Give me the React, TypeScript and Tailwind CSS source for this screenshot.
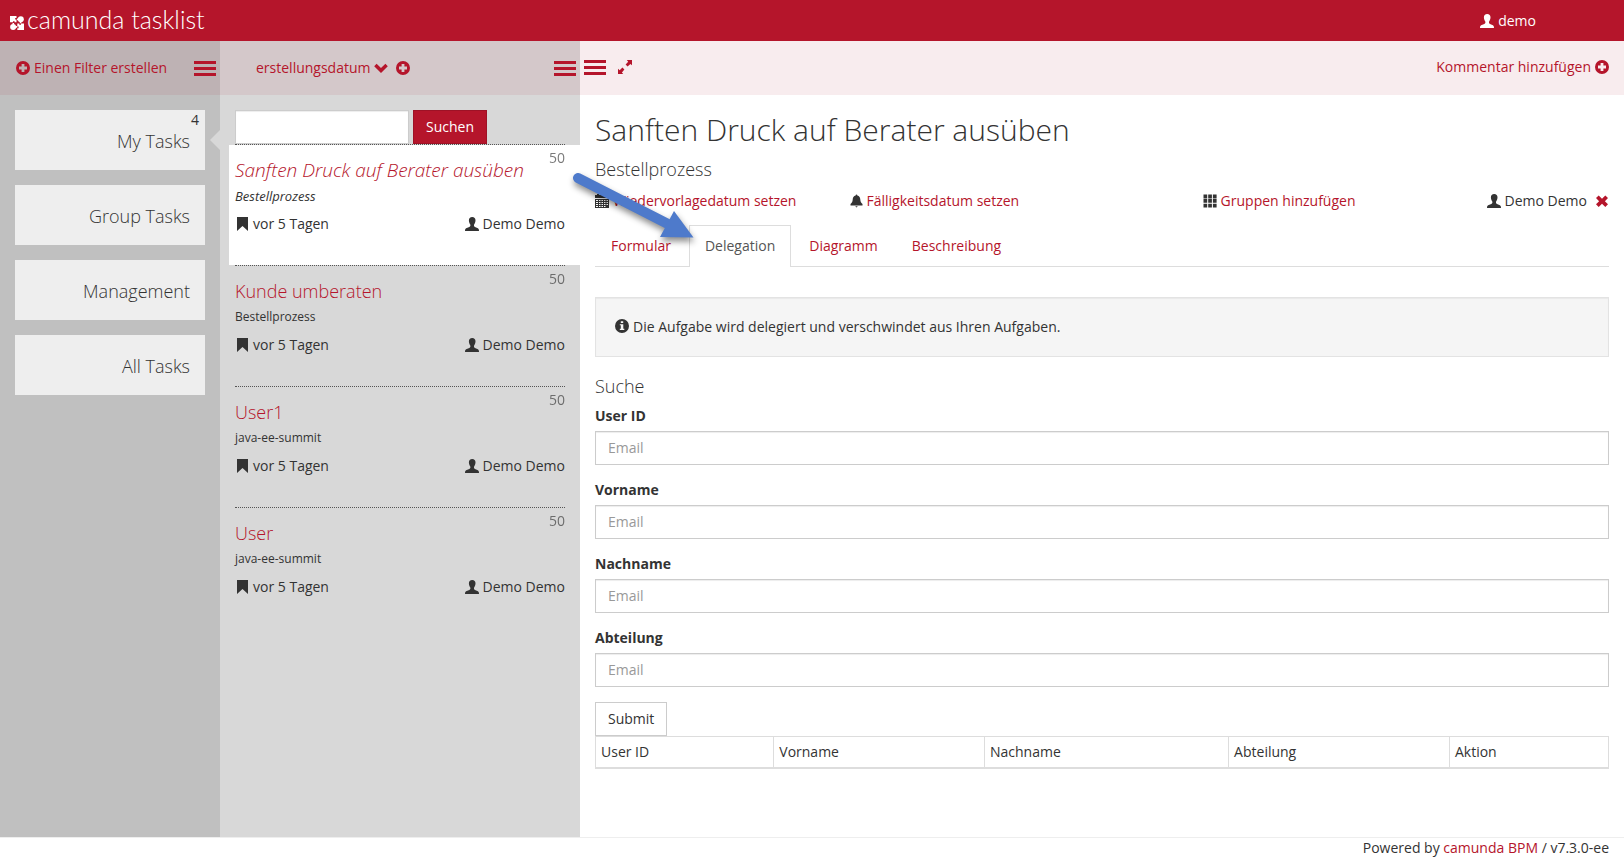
import type { ReactNode } from "react";

const tasks = [
  { title: "Sanften Druck auf Berater ausüben", process: "Bestellprozess", active: true },
  { title: "Kunde umberaten", process: "Bestellprozess", active: false },
  { title: "User1", process: "java-ee-summit", active: false },
  { title: "User", process: "java-ee-summit", active: false },
];

const filters = [
  { name: "My Tasks", count: 4 },
  { name: "Group Tasks" },
  { name: "Management" },
  { name: "All Tasks" },
];

const fields = ["User ID", "Vorname", "Nachname", "Abteilung"];

const columns = [
  { name: "User ID", width: "w-[17.6%]" },
  { name: "Vorname", width: "w-[20.8%]" },
  { name: "Nachname", width: "w-[24.1%]" },
  { name: "Abteilung", width: "w-[21.8%]" },
  { name: "Aktion", width: "w-[15.7%]" },
];

function Icon({ children }: { children: ReactNode }) {
  return (
    <svg viewBox="0 0 14 14" fill="currentColor" aria-hidden="true" className="size-[14px] shrink-0">
      {children}
    </svg>
  );
}

const PlusSign = () => (
  <Icon>
    <path fillRule="evenodd" d="M7 0a7 7 0 1 1 0 14A7 7 0 0 1 7 0ZM5.6 3v2.6H3v2.8h2.6V11h2.8V8.4H11V5.6H8.4V3Z" />
  </Icon>
);

const InfoSign = () => (
  <Icon>
    <path fillRule="evenodd" d="M7 0a7 7 0 1 1 0 14A7 7 0 0 1 7 0ZM5.8 2.2v1.9h2.4V2.2ZM4.8 5.2v1h1v3.6h-1v1.3h4.5V9.8h-1V5.2Z" />
  </Icon>
);

const UserIcon = () => (
  <Icon>
    <path d="M7.2 0C9.3 0 10.6 1.4 10.500 3.600C10.400 5.500 9.800 6.700 9.100 7.500C8.800 8.600 9 9.500 10 10L12.900 11.200C13.700 11.700 14 12.500 14 14H0C0 12.500 .3 11.700 1.100 11.200L4.300 10C5.300 9.500 5.600 8.600 5.300 7.500C4.600 6.700 4 5.500 3.900 3.600C3.800 1.400 5.100 0 7.200 0Z" />
  </Icon>
);

const Bookmark = () => (
  <Icon>
    <path d="M2 0H13V14L7.500 9L2 14Z" />
  </Icon>
);

const Calendar = () => (
  <Icon>
    <path d="M0 1h2V0h2v1h6V0h2v1h2v3H0Z" />
    <path fillRule="evenodd" d="M0 5h14v9H0ZM1 6v1h2V6ZM4 6v1h1.500V6ZM6.500 6v1H8V6ZM9 6v1h1.500V6ZM11.500 6v1H13V6ZM1 8v1h2V8ZM4 8v1h1.500V8ZM6.500 8v1H8V8ZM9 8v1h1.500V8ZM11.500 8v1H13V8ZM1 10v1h2v-1ZM4 10v1h1.500v-1ZM6.500 10v1H8v-1ZM9 10v1h1.500v-1ZM11.500 10v1H13v-1ZM1 12v1h2v-1ZM4 12v1h1.500v-1ZM6.500 12v1H8v-1ZM9 12v1h1.500v-1Z" />
  </Icon>
);

const Bell = () => (
  <Icon>
    <path d="M6.700 1.200a.8.8 0 0 1 1.600 0v.4C10.500 2 11.100 3.600 11.300 5.500C11.500 7.600 11.800 8.700 13.500 10v1.500H1.500V10C3.200 8.700 3.500 7.600 3.700 5.500C3.900 3.600 4.500 2 6.700 1.600ZM6.200 12.300h2.600L7.500 13.600Z" />
  </Icon>
);

const Grid = () => (
  <Icon>
    <path d="M.5 .5h3.700v4H.5ZM5.200 .5h3.700v4H5.200ZM9.900 .5h3.700v4H9.900ZM.5 5h3.700v3.800H.5ZM5.200 5h3.700v3.800H5.200ZM9.900 5h3.700v3.800H9.900ZM.5 9.800h3.700v3.700H.5ZM5.200 9.800h3.700v3.700H5.200ZM9.900 9.800h3.700v3.700H9.900Z" />
  </Icon>
);

const Remove = () => (
  <Icon>
    <path d="M3.700 1.400L7 4.700L10.300 1.400L13 4.100L9.900 7.200L13 10.300L10.300 13L7 9.700L3.700 13L1 10.300L4.100 7.200L1 4.100Z" />
  </Icon>
);

const ChevronDown = () => (
  <Icon>
    <path d="M2.600 2.800L7 7L11.400 2.800L13.800 5.200L7 12L.2 5.200Z" />
  </Icon>
);

const ResizeFull = () => (
  <Icon>
    <path d="M8.800 0H14V5.200L12.400 3.900L9.600 6.400L7.600 4.400L10.200 1.700ZM0 8.800L1.700 10.200L4.400 7.600L6.400 9.600L3.900 12.400L5.200 14H0Z" />
  </Icon>
);

function MenuButton({ label }: { label: string }) {
  return (
    <button type="button" aria-label={label} className="flex w-[22px] shrink-0 flex-col gap-[3px]">
      <span className="h-[3px] w-full bg-[#b5152b]" />
      <span className="h-[3px] w-full bg-[#b5152b]" />
      <span className="h-[3px] w-full bg-[#b5152b]" />
    </button>
  );
}

function LogoMark() {
  return (
    <svg viewBox="0 0 14 14" fill="#fff" aria-hidden="true" className="mt-1 size-[14px] shrink-0">
      <path d="M0 0H6.500V2H5.200V3.500H6.500V6.300H4.600V5.200H3V6.300H0Z" />
      <circle cx="10.800" cy="3.200" r="3" />
      <circle cx="3.100" cy="11" r="3" />
      <path d="M14 14H7.300V12.300H8.600V10.600H7.300V7.600H9.300V8.800H11V7.600H14Z" />
      <path d="M7 2.600h1.500v1.600H7ZM9.800 5.800h1.600v1.500H9.800ZM2.500 7h1.600v1.500H2.500ZM5.600 10.100H7.200v1.600H5.600Z" />
    </svg>
  );
}

function TaskItem({ title, process, active }: { title: string; process: string; active: boolean }) {
  return (
    <li className="pl-[9px]">
      <div className="mr-[15px] ml-[6px] border-t border-dotted border-[#555]" />
      <div className={active ? "bg-white pr-[15px] pl-[6px]" : "pr-[15px] pl-[6px]"}>
        <div className="relative flex h-[120px] flex-col pt-[13px]">
          <span className="absolute top-[3px] right-0 leading-5 text-[#333] opacity-65">50</span>
          <h4 className={active ? "text-[19px] leading-6 font-light italic" : "text-[18px] leading-6 font-light"}>
            <a href="#task" className="text-[#b5152b]">{title}</a>
          </h4>
          <div className={active ? "mt-1 text-[13px] leading-5 italic" : "mt-1 text-[12px] leading-5"}>{process}</div>
          <div className="mt-2 flex items-center justify-between leading-5">
            <span className="flex items-center gap-1"><Bookmark />vor 5 Tagen</span>
            <span className="flex items-center gap-1"><UserIcon />Demo Demo</span>
          </div>
        </div>
      </div>
    </li>
  );
}

function Arrow() {
  return (
    <svg
      viewBox="0 0 130 80"
      aria-hidden="true"
      className="pointer-events-none absolute top-[75px] -left-[10px] h-[80px] w-[130px] drop-shadow-[1px_4px_3px_rgba(0,0,0,0.45)]"
    >
      <path d="M8 8L97 53.500" stroke="#4e7acb" strokeWidth="10" strokeLinecap="round" />
      <path d="M104 41L123.500 67.500L90 67Z" fill="#4e7acb" />
    </svg>
  );
}

export default function App() {
  return (
    <div className="flex min-h-screen flex-col bg-white font-['Open_Sans',sans-serif] text-[14px] leading-5 text-[#333]">
      <header className="flex h-[41px] items-center justify-between bg-[#b5152b] pr-[88px] pl-[10px] text-white">
        <a href="#home" className="flex items-center gap-[3px]">
          <LogoMark />
          <span className="pb-1 font-['Lato',sans-serif] text-[25px] leading-8 font-light">camunda tasklist</span>
        </a>
        <button type="button" className="flex items-center gap-1"><UserIcon />demo</button>
      </header>

      <main className="flex flex-1">
        <section className="flex w-[220px] shrink-0 flex-col bg-[#c0c0c0]">
          <div className="flex h-[54px] items-center justify-between bg-[#beb2b4] pr-1 pl-4 text-[#b5152b]">
            <button type="button" className="flex items-center gap-1"><PlusSign />Einen Filter erstellen</button>
            <MenuButton label="Filter" />
          </div>
          <ul className="flex flex-col gap-[15px] py-[15px] pl-[15px]">
            {filters.map((f) => (
              <li key={f.name} className="relative pr-[15px]">
                <a href="#filter" className="flex h-[60px] flex-col bg-[#eee] pr-[15px] pt-[19px] text-right text-[18px] leading-6 font-light">
                  {f.name}
                </a>
                {f.count && (
                  <>
                    <span className="absolute top-0 right-[21px]">{f.count}</span>
                    <span className="absolute top-[20px] right-0 border-y-10 border-r-10 border-y-transparent border-r-[#d8d8d8]" />
                  </>
                )}
              </li>
            ))}
          </ul>
        </section>

        <section className="flex w-[360px] shrink-0 flex-col bg-[#d8d8d8]">
          <div className="flex h-[54px] items-center bg-[#d4c8ca] pr-1 pl-9 text-[#b5152b]">
            <button type="button" className="flex items-center gap-[3px]">erstellungsdatum<ChevronDown /></button>
            <button type="button" aria-label="Sortierung hinzufügen" className="ml-2"><PlusSign /></button>
            <div className="ml-auto"><MenuButton label="Aufgaben" /></div>
          </div>
          <form className="flex gap-1 pt-[15px] pl-[15px]" onSubmit={(e) => e.preventDefault()}>
            <input aria-label="Suchen" className="h-[34px] w-[174px] border border-[#ccc] bg-white px-3 shadow-[inset_0_1px_1px_rgba(0,0,0,0.075)]" />
            <button type="submit" className="h-[34px] border border-[#9e1226] bg-[#b5152b] px-3 text-white">Suchen</button>
          </form>
          <ul>
            {tasks.map((t) => <TaskItem key={t.title} {...t} />)}
          </ul>
        </section>

        <section className="flex min-w-0 flex-1 flex-col">
          <div className="flex h-[54px] items-center gap-3 bg-[#f8ecee] pr-[15px] pb-[2px] pl-1 text-[#b5152b]">
            <MenuButton label="Details" />
            <button type="button" aria-label="Vergrößern"><ResizeFull /></button>
            <button type="button" className="ml-auto flex items-center gap-1">Kommentar hinzufügen<PlusSign /></button>
          </div>

          <div className="relative px-[15px] pt-[15px]">
            <h2 className="text-[30px] leading-10 font-light">Sanften Druck auf Berater ausüben</h2>
            <h3 className="mt-[7px] text-[18px] leading-6 font-light">Bestellprozess</h3>
            <div className="mt-[10px] grid grid-cols-4">
              <a href="#followup" className="flex items-center gap-1 text-[#b5152b]"><span className="text-[#333]"><Calendar /></span>Wiedervorlagedatum setzen</a>
              <a href="#due" className="flex items-center gap-1 text-[#b5152b]"><span className="text-[#333]"><Bell /></span>Fälligkeitsdatum setzen</a>
              <a href="#groups" className="flex items-center justify-end gap-1 text-[#b5152b]"><span className="text-[#333]"><Grid /></span>Gruppen hinzufügen</a>
              <span className="flex items-center justify-end gap-1">
                <UserIcon />Demo Demo
                <button type="button" aria-label="Bearbeiter entfernen" className="ml-1 text-[#b5152b]"><Remove /></button>
              </span>
            </div>
            <nav className="mt-[14px] flex border-b border-[#ddd]">
              <a href="#formular" className="border border-b-0 border-transparent px-[15px] py-[10px] text-[#b5152b]">Formular</a>
              <a href="#delegation" className="-mb-px ml-[2px] border border-b-0 border-[#ddd] bg-white px-[15px] py-[10px] text-[#555]">Delegation</a>
              <a href="#diagramm" className="ml-[2px] border border-b-0 border-transparent px-[15px] py-[10px] text-[#b5152b]">Diagramm</a>
              <a href="#beschreibung" className="ml-[2px] border border-b-0 border-transparent px-[15px] py-[10px] text-[#b5152b]">Beschreibung</a>
            </nav>
            <div className="mt-[30px] flex h-[60px] gap-1 border border-[#e3e3e3] bg-[#f5f5f5] p-[19px] shadow-[inset_0_1px_1px_rgba(0,0,0,0.05)]">
              <span className="pt-[2px]"><InfoSign /></span>
              <p>Die Aufgabe wird delegiert und verschwindet aus Ihren Aufgaben.</p>
            </div>
            <form onSubmit={(e) => e.preventDefault()}>
              <h3 className="mt-[17px] mb-2 text-[18px] leading-6 font-light">Suche</h3>
              {fields.map((name) => (
                <div key={name} className="mb-[15px]">
                  <label htmlFor={name} className="mb-[5px] block font-bold">{name}</label>
                  <input
                    id={name}
                    placeholder="Email"
                    className="block h-[34px] w-full border border-[#ccc] px-3 pb-[2px] shadow-[inset_0_1px_1px_rgba(0,0,0,0.075)] placeholder:text-[#999]"
                  />
                </div>
              ))}
              <button type="submit" className="block h-[34px] border border-[#ccc] px-3">Submit</button>
            </form>
            <table className="w-full table-fixed border-collapse border border-[#ddd] text-left">
              <thead>
                <tr>
                  {columns.map((c) => (
                    <th key={c.name} scope="col" className={`${c.width} border border-b-2 border-[#ddd] p-[5px] font-medium`}>{c.name}</th>
                  ))}
                </tr>
              </thead>
            </table>
            <Arrow />
          </div>
        </section>
      </main>

      <footer className="flex h-[25px] justify-end border-t border-[#eee] px-[15px]">
        <span>Powered by <a href="#camunda" className="text-[#b5152b]">camunda BPM</a> / v7.3.0-ee</span>
      </footer>
    </div>
  );
}
